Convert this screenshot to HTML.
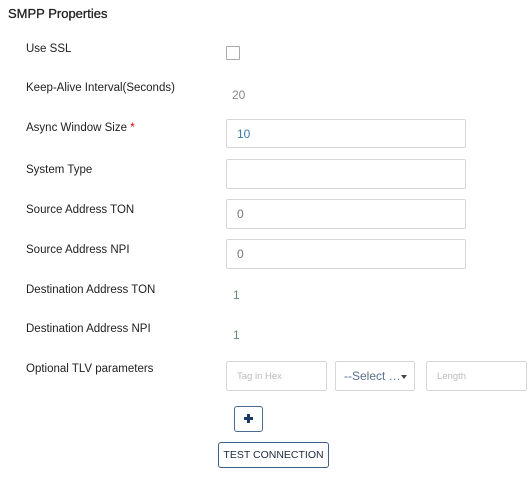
<!DOCTYPE html>
<html><head><meta charset="utf-8"><style>
*{margin:0;padding:0;box-sizing:border-box}
body{width:529px;height:481px;background:#fff;font-family:"Liberation Sans",sans-serif;color:#222;position:relative;overflow:hidden}
.a{position:absolute;white-space:nowrap}
.l{font-size:11.5px;left:26px;color:#222}
.in{position:absolute;border:1px solid #d6d6d6;border-radius:2px;background:#fff;font-size:12px;color:#777;padding-left:10px;display:flex;align-items:center}
.v{font-size:12px;color:#888}
</style></head><body>
<div class="a" style="left:8px;top:6px;font-size:13px;color:#222;-webkit-text-stroke:0.3px #222">SMPP Properties</div>

<div class="a l" style="top:43px">Use SSL</div>
<div class="a" style="left:226px;top:46px;width:14px;height:14px;border:1px solid #aaa;border-radius:1px"></div>

<div class="a l" style="top:82px">Keep-Alive Interval(Seconds)</div>
<div class="a v" style="left:232px;top:88px">20</div>

<div class="a l" style="top:122px">Async Window Size <span style="color:#d00">*</span></div>
<div class="in" style="left:226px;top:119px;width:240px;height:29px;color:#3a7bb8">10</div>

<div class="a l" style="top:164px">System Type</div>
<div class="in" style="left:226px;top:159px;width:240px;height:30px"></div>

<div class="a l" style="top:204px">Source Address TON</div>
<div class="in" style="left:226px;top:199px;width:240px;height:30px">0</div>

<div class="a l" style="top:244px">Source Address NPI</div>
<div class="in" style="left:226px;top:239px;width:240px;height:30px">0</div>

<div class="a l" style="top:284px">Destination Address TON</div>
<div class="a v" style="left:233px;top:288px;color:#6a8a6a">1</div>

<div class="a l" style="top:323px">Destination Address NPI</div>
<div class="a v" style="left:233px;top:328px;color:#6a8a6a">1</div>

<div class="a l" style="top:363px">Optional TLV parameters</div>
<div class="in" style="left:226px;top:361px;width:101px;height:30px;font-size:9.5px;color:#bbb">Tag in Hex</div>
<div class="in" style="left:335px;top:361px;width:80px;height:30px;font-size:12px;color:#5a7090;padding-left:8px">--Select …<span style="position:absolute;right:7px;top:13px;border-left:3.5px solid transparent;border-right:3.5px solid transparent;border-top:4px solid #444"></span></div>
<div class="in" style="left:426px;top:361px;width:101px;height:30px;font-size:9.5px;color:#bbb">Length</div>

<div class="a" style="left:234px;top:406px;width:29px;height:26px;border:1px solid #4a6a90;border-radius:3px"></div>
<div class="a" style="left:244px;top:417px;width:9px;height:3px;background:#1c3a66"></div>
<div class="a" style="left:247px;top:414px;width:3px;height:9px;background:#1c3a66"></div>

<div class="a" style="left:218px;top:442px;width:111px;height:26px;border:1px solid #3e5f86;border-radius:3px;font-size:10.5px;color:#1c2a3a;display:flex;align-items:center;justify-content:center">TEST CONNECTION</div>
</body></html>
